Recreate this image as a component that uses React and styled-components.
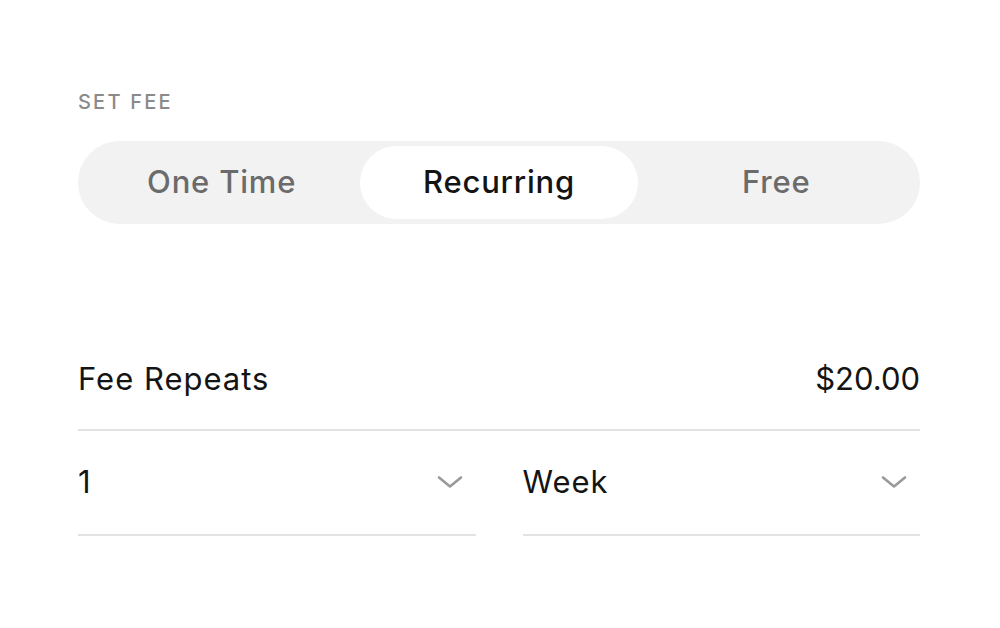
import React, { useState } from "react";
import styled, { createGlobalStyle } from "styled-components";

const GlobalStyle = createGlobalStyle`
  html, body {
    margin: 0;
    padding: 0;
    background: #ffffff;
  }
  body {
    font-family: Inter, "Liberation Sans", Arial, sans-serif;
    -webkit-font-smoothing: antialiased;
  }
`;

const Page = styled.div`
  width: 1000px;
  height: 628px;
  box-sizing: border-box;
  padding: 90px 80px 0 78px;
  display: flex;
  flex-direction: column;
`;

const SectionLabel = styled.div`
  font-size: 20px;
  font-weight: 500;
  letter-spacing: 2.2px;
  color: #8a8a8a;
  line-height: 24px;
  margin-bottom: 27px;
`;

const Segmented = styled.div`
  display: grid;
  grid-template-columns: repeat(3, 1fr);
  height: 83px;
  box-sizing: border-box;
  padding: 5px;
  border-radius: 42px;
  background: #f2f2f2;
`;

const Segment = styled.button`
  border: none;
  margin: 0;
  padding: 0 0 3px;
  font-family: inherit;
  font-size: 31px;
  font-weight: 500;
  letter-spacing: 0.8px;
  border-radius: 37px;
  cursor: pointer;
  background: ${(p) => (p.$active ? "#ffffff" : "transparent")};
  color: ${(p) => (p.$active ? "#141414" : "#6b6b6b")};
`;

const FeeRow = styled.div`
  display: flex;
  justify-content: space-between;
  align-items: center;
  margin-top: 126px;
  height: 56px;
  border-bottom: 2px solid #e3e3e3;
  padding-bottom: 23px;
  font-size: 31px;
  color: #141414;
`;

const Label = styled.span`
  letter-spacing: ${(p) => p.$spacing || "1px"};
`;

const SelectRow = styled.div`
  display: grid;
  grid-template-columns: 1fr 1fr;
  column-gap: 47px;
`;

const Select = styled.div`
  display: flex;
  align-items: center;
  justify-content: space-between;
  height: 105px;
  box-sizing: border-box;
  padding-bottom: 2px;
  border-bottom: 2px solid #e3e3e3;
  font-size: 31px;
  color: #141414;
`;

const Chevron = () => (
  <svg width="26" height="16" viewBox="0 0 26 16" style={{ marginRight: 13 }}>
    <path
      d="M2 3.5 L13 12.5 L24 3.5"
      fill="none"
      stroke="#9a9a9a"
      strokeWidth="2.6"
      strokeLinecap="round"
      strokeLinejoin="round"
    />
  </svg>
);

const options = ["One Time", "Recurring", "Free"];

export default function App() {
  const [mode, setMode] = useState("Recurring");
  return (
    <>
      <GlobalStyle />
      <Page>
        <SectionLabel>SET FEE</SectionLabel>
        <Segmented>
          {options.map((o) => (
            <Segment key={o} $active={o === mode} onClick={() => setMode(o)}>
              {o}
            </Segment>
          ))}
        </Segmented>
        <FeeRow>
          <Label>Fee Repeats</Label>
          <Label $spacing="0px">$20.00</Label>
        </FeeRow>
        <SelectRow>
          <Select>
            <Label>1</Label>
            <Chevron />
          </Select>
          <Select>
            <Label>Week</Label>
            <Chevron />
          </Select>
        </SelectRow>
      </Page>
    </>
  );
}
